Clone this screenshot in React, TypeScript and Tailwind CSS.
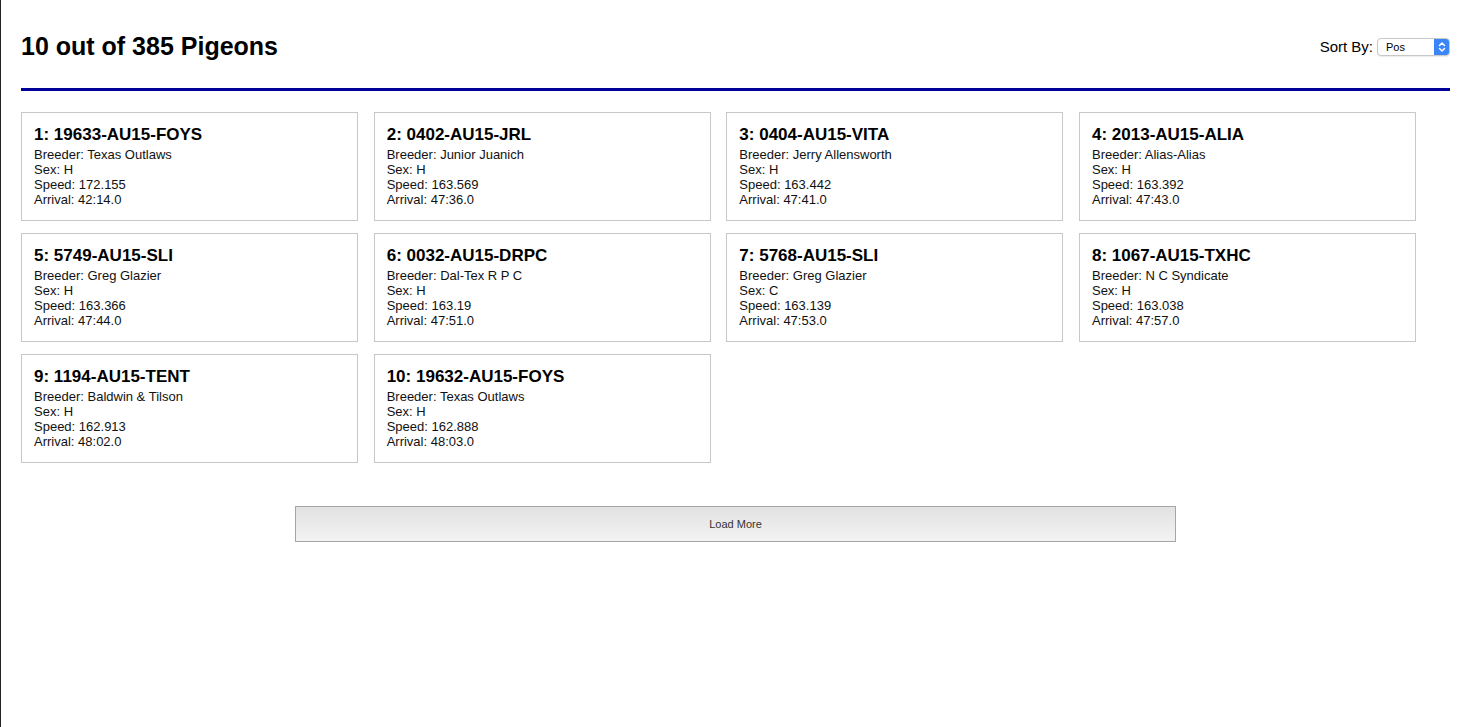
const pigeons = [
  { pos: 1, band: "19633-AU15-FOYS", breeder: "Texas Outlaws", sex: "H", speed: "172.155", arrival: "42:14.0" },
  { pos: 2, band: "0402-AU15-JRL", breeder: "Junior Juanich", sex: "H", speed: "163.569", arrival: "47:36.0" },
  { pos: 3, band: "0404-AU15-VITA", breeder: "Jerry Allensworth", sex: "H", speed: "163.442", arrival: "47:41.0" },
  { pos: 4, band: "2013-AU15-ALIA", breeder: "Alias-Alias", sex: "H", speed: "163.392", arrival: "47:43.0" },
  { pos: 5, band: "5749-AU15-SLI", breeder: "Greg Glazier", sex: "H", speed: "163.366", arrival: "47:44.0" },
  { pos: 6, band: "0032-AU15-DRPC", breeder: "Dal-Tex R P C", sex: "H", speed: "163.19", arrival: "47:51.0" },
  { pos: 7, band: "5768-AU15-SLI", breeder: "Greg Glazier", sex: "C", speed: "163.139", arrival: "47:53.0" },
  { pos: 8, band: "1067-AU15-TXHC", breeder: "N C Syndicate", sex: "H", speed: "163.038", arrival: "47:57.0" },
  { pos: 9, band: "1194-AU15-TENT", breeder: "Baldwin & Tilson", sex: "H", speed: "162.913", arrival: "48:02.0" },
  { pos: 10, band: "19632-AU15-FOYS", breeder: "Texas Outlaws", sex: "H", speed: "162.888", arrival: "48:03.0" },
];

function PigeonCard({ p }: { p: (typeof pigeons)[number] }) {
  return (
    <div className="w-[337px] h-[109px] border border-[#c8c8c8] px-[12px] pt-[10px]">
      <h3 className="text-[17px] leading-[23px] font-bold text-black">
        {p.pos}: {p.band}
      </h3>
      <div className="text-[13px] leading-[15px] text-[#111] mt-[1px]">
        <div>Breeder: {p.breeder}</div>
        <div>Sex: {p.sex}</div>
        <div>Speed: {p.speed}</div>
        <div>Arrival: {p.arrival}</div>
      </div>
    </div>
  );
}

export default function App() {
  return (
    <div
      className="min-h-[727px] bg-white border-l border-[#222] pl-[20px] pr-[14px]"
      style={{ fontFamily: '"Liberation Sans", Arial, sans-serif' }}
    >
      <div className="flex items-center justify-between h-[88px] pt-[6px]">
        <h1 className="text-[25px] font-bold text-black">10 out of 385 Pigeons</h1>
        <div className="flex items-center gap-[4px] text-[15px] text-black">
          <span>Sort By:</span>
          <div className="flex items-center w-[73px] h-[18px] rounded-[4px] border border-[#c8c8c8] bg-white overflow-hidden shadow-[0_1px_1px_rgba(0,0,0,0.08)]">
            <span className="flex-1 pl-[8px] text-[11px] leading-[16px]">Pos</span>
            <span className="w-[15px] h-full bg-[#3a85f7] flex items-center justify-center">
              <svg width="8" height="12" viewBox="0 0 8 12" fill="none" stroke="white" strokeWidth="1.5" strokeLinecap="round" strokeLinejoin="round">
                <path d="M1.5 4.5 L4 2 L6.5 4.5" />
                <path d="M1.5 7.5 L4 10 L6.5 7.5" />
              </svg>
            </span>
          </div>
        </div>
      </div>
      <div className="h-[3px] bg-[#000099]" />
      <div className="flex flex-wrap gap-x-[15.67px] gap-y-[12px] pt-[21px] w-[1400px]">
        {pigeons.map((p) => (
          <PigeonCard key={p.pos} p={p} />
        ))}
      </div>
      <div className="flex justify-center pt-[43px]">
        <button className="w-[881px] h-[36px] border border-[#a6a6a6] bg-gradient-to-b from-[#e2e2e2] to-[#f3f3f3] text-[11px] text-[#333] cursor-pointer">
          Load More
        </button>
      </div>
    </div>
  );
}
